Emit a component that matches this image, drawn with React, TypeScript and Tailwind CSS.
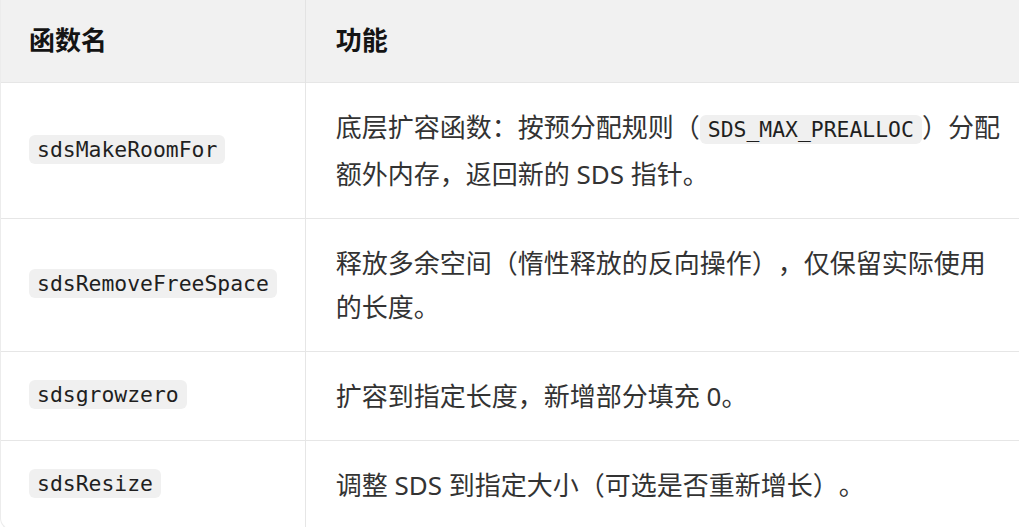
const rows = [
  {
    name: 'sdsMakeRoomFor',
    desc: (
      <>
        底层扩容函数：按预分配规则（<Code>SDS_MAX_PREALLOC</Code>）分配额外内存，返回新的 SDS 指针。
      </>
    ),
  },
  {
    name: 'sdsRemoveFreeSpace',
    desc: <>释放多余空间（惰性释放的反向操作），仅保留实际使用的长度。</>,
  },
  { name: 'sdsgrowzero', desc: <>扩容到指定长度，新增部分填充 0。</> },
  { name: 'sdsResize', desc: <>调整 SDS 到指定大小（可选是否重新增长）。</> },
];

function Code({ children }: { children: React.ReactNode }) {
  return (
    <code className="rounded-md bg-[#f0f0f0] px-[8px] py-[2px] font-['DejaVu_Sans_Mono',monospace] text-[21.4px] tracking-normal text-[#1f1f1f]">
      {children}
    </code>
  );
}

export default function App() {
  return (
    <div className="h-[527px] w-[1019px] overflow-hidden bg-white font-['Noto_Sans','Noto_Sans_CJK_SC',sans-serif]">
      <div className="w-[1019px] overflow-hidden rounded-bl-xl border-b border-l border-[#ececec]">
        <table className="w-full border-collapse text-left">
          <thead>
            <tr className="h-[82px] bg-[#f1f1f1]">
              <th className="w-[304px] border-r border-[#e3e3e3] px-7 text-[26px] font-bold text-[#141414]">函数名</th>
              <th className="pl-[30px] text-[26px] font-bold text-[#141414]">功能</th>
            </tr>
          </thead>
          <tbody>
            {rows.map((r) => (
              <tr key={r.name} className="border-t border-[#e6e6e6]">
                <td className="border-r border-[#e6e6e6] px-7 align-middle">
                  <Code>{r.name}</Code>
                </td>
                <td className="py-[22px] pl-[30px] pr-3 align-middle text-[26px] leading-[44px] text-[#333333] [text-spacing-trim:space-all]">
                  {r.desc}
                </td>
              </tr>
            ))}
          </tbody>
        </table>
      </div>
    </div>
  );
}
